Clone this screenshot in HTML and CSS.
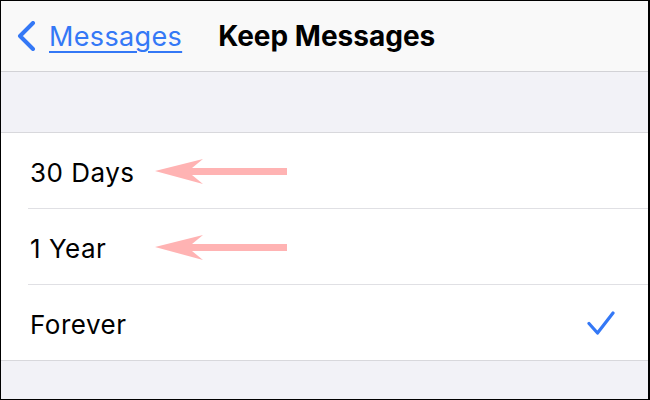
FILE: index.html
```html
<!DOCTYPE html>
<html>
<head>
<meta charset="utf-8">
<link rel="stylesheet" href="styles.css">
</head>
<body>
<div class="frame">
  <header class="nav">
    <a class="back" href="#">
      <svg class="chev" width="22" height="30" viewBox="0 0 22 30"><path d="M18 2 L5 15 L18 28" fill="none" stroke="#3478f6" stroke-width="4" stroke-linecap="round" stroke-linejoin="round"/></svg>
      <span class="back-label">Messages</span>
    </a>
    <h1 class="title">Keep Messages</h1>
  </header>
  <div class="gap"></div>
  <ul class="list">
    <li class="row"><span class="label">30 Days</span>
      <svg class="arrow" width="135" height="28" viewBox="0 0 135 28"><polygon points="0,13 48,1 37,10 132,10 132,17 37,17 48,26" fill="#ffb3b3"/></svg>
    </li>
    <li class="row"><span class="label">1 Year</span>
      <svg class="arrow" width="135" height="28" viewBox="0 0 135 28"><polygon points="0,13 48,1 37,10 132,10 132,17 37,17 48,26" fill="#ffb3b3"/></svg>
    </li>
    <li class="row"><span class="label">Forever</span>
      <svg class="check" width="28" height="27" viewBox="0 0 28 27"><path d="M2 13.5 L10.5 23 L26 3" fill="none" stroke="#3478f6" stroke-width="3.2" stroke-linecap="round" stroke-linejoin="round"/></svg>
    </li>
  </ul>
</div>
</body>
</html>
```
FILE: styles.css
```css
* { box-sizing: border-box; }
html, body { margin: 0; padding: 0; }
body { font-family: Inter, "Noto Sans", sans-serif; background: #000; }
.frame {
  width: 650px; height: 400px;
  border-left: 1px solid #000; border-right: 2px solid #000;
  border-top: 1px solid #000; border-bottom: 1px solid #000;
  background: #f2f2f7;
  display: flex; flex-direction: column;
  overflow: hidden;
}
.nav {
  height: 71px; flex: none;
  background: #f9f9f9;
  border-bottom: 1px solid #d2d2d6;
  display: flex; align-items: center;
  padding-left: 14px;
}
.back {
  display: flex; align-items: center;
  color: #3478f6; text-decoration: none;
}
.chev { margin-right: 12px; }
.back-label {
  font-size: 27px; text-decoration: underline;
  text-underline-offset: 5px; text-decoration-thickness: 2px;
  letter-spacing: 0.35px;
}
.title {
  margin: 0 0 0 36px;
  font-size: 28px; font-weight: 700; color: #000;
  letter-spacing: 0;
}
.gap { height: 60px; flex: none; }
.list {
  list-style: none; margin: 0; padding: 0 0 0 27px;
  background: #fff;
  border-top: 1px solid #d8d8dc;
  border-bottom: 1px solid #d8d8dc;
}
.row {
  position: relative;
  height: 76px;
  display: flex; align-items: center; justify-content: space-between;
  padding: 0 33px 0 2px;
  border-bottom: 1px solid #e0e0e4;
}
.row:last-child { border-bottom: none; height: 75px; }
.label { font-size: 26px; color: #000; letter-spacing: 0.5px; margin-top: 3px; }
.arrow { position: absolute; left: 127px; top: 25px; }
.check { margin-top: 2px; }
```
